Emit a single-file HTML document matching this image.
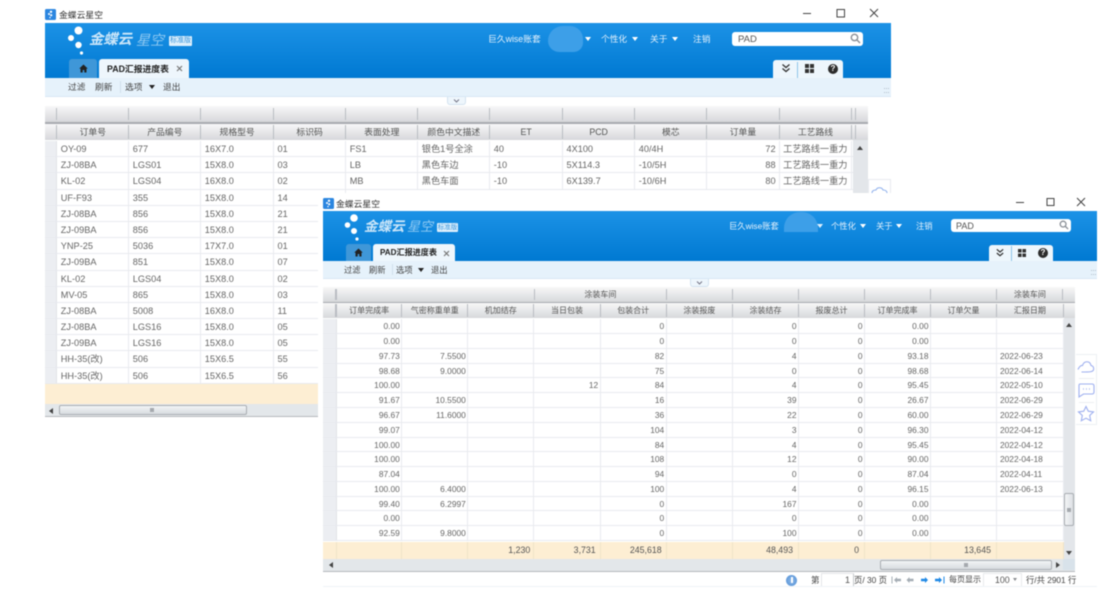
<!DOCTYPE html>
<html><head><meta charset="utf-8"><style>
html,body{margin:0;padding:0;background:#fff}
#p{position:relative;width:1111px;height:597px;overflow:hidden;background:#fff;filter:blur(.45px);font-family:"Liberation Sans","Noto Sans CJK SC",sans-serif;color:#555}
#p *{box-sizing:border-box}
.a,.t{position:absolute}
.t{white-space:nowrap;line-height:12px;height:12px}
.w{color:#e4f1fc}
.tb{color:#444}
.bl{background:linear-gradient(#1c92e6,#0079d2)}
.hd{background:linear-gradient(#f8f8f8,#d6d8db)}
.g{display:grid}
.g i{font-style:normal;display:block;overflow:hidden;white-space:nowrap;border-right:1px solid #e9ebf0;padding:0 3px;text-align:right}
.g i.l{text-align:left}
.g i:first-child{background:#eceef2;border-right:1px solid #e1e3e8}
#r1 .g{grid-template-columns:12.3px 72px 72px 72.7px 72.3px 72px 72px 72.7px 72.3px 72px 72.4px 72.6px;height:16.2px;line-height:16px;font-size:9.2px;border-bottom:1px solid #e8eaef;color:#666}
#r1 .g i{padding:0 3px 0 3.5px}
#r2 .g{grid-template-columns:14px 65.3px 66px 66px 66.4px 66px 66.3px 66px 66px 66px 66px 66.7px;height:14.79px;line-height:15.6px;font-size:8.4px;border-bottom:1px solid #e8eaef;color:#666}
#r2 .g i{padding-right:1.5px}
.hg i{background:none!important;border-right:1px solid #b9bcc2!important;text-align:center!important;color:#555;padding:0!important}
.f{font-size:8.8px;color:#555}
.f i{background:none!important;border-right:1px solid #f0e3c8!important}
</style></head><body><div id="p">

<!-- WINDOW 1 -->
<svg class="a" style="left:45px;top:9px" width="11" height="11" viewBox="0 0 11 11"><rect width="11" height="11" rx="1.5" fill="#2b86e0"/><circle cx="6" cy="2.8" r="1.2" fill="#fff"/><circle cx="4" cy="5" r="1" fill="#fff"/><circle cx="6.2" cy="6.2" r="1.1" fill="#fff"/><circle cx="5" cy="8.6" r=".7" fill="#fff"/></svg>
<span class="t" style="left:59px;top:9px;font-size:8.8px;color:#333">金蝶云星空</span>
<svg class="a" style="left:800px;top:6px" width="82" height="14" viewBox="0 0 82 14" fill="none" stroke="#444" stroke-width="1"><path d="M3 7.5h8M37 3.5h7.500v7.500H37zM70 3l8 8M78 3l-8 8"/></svg>

<div class="a bl" style="left:45px;top:23px;width:846px;height:55px"></div>
<svg class="a" style="left:66px;top:25px" width="24" height="32" viewBox="0 0 24 32" fill="#fff"><circle cx="12.5" cy="5.500" r="4"/><circle cx="5" cy="13" r="3"/><circle cx="12.5" cy="20" r="3.200"/><circle cx="15.500" cy="28" r="1.600"/></svg>
<span class="t" style="left:89px;top:33px;font-size:14.300px;line-height:15px;height:15px;color:#dff0fc;font-style:italic;font-weight:bold;opacity:.9">金蝶云</span>
<span class="t" style="left:136px;top:33px;font-size:14px;line-height:15px;height:15px;color:#8fc9f2;font-style:italic">星空</span>
<div class="a" style="left:169px;top:36px;width:23px;height:10px;background:#dff0fc;border-radius:1px;color:#3b97dd;font-size:7px;line-height:10px;text-align:center;white-space:nowrap">标准版</div>

<div class="a" style="left:69px;top:59px;width:28px;height:19px;background:#3f97d8;border-radius:3px 3px 0 0"></div>
<svg class="a" style="left:79px;top:64px" width="9" height="9" viewBox="0 0 9 9" fill="#222"><path d="M4.5 .5L.2 4.600h1.300V8.500h2.200V6h1.600v2.500h2.200V4.600h1.300z"/></svg>
<div class="a" style="left:98.5px;top:59px;width:90px;height:19px;background:#eef6fc;border-radius:3px 3px 0 0"></div>
<span class="t" style="left:107px;top:63px;font-size:8.800px;font-weight:bold;color:#222">PAD汇报进度表</span>
<svg class="a" style="left:176px;top:65px" width="7" height="7" viewBox="0 0 7 7" stroke="#777" stroke-width="1.200"><path d="M1 1l5 5M6 1L1 6"/></svg>

<span class="t w" style="left:488px;top:33px;font-size:8.800px">巨久wise账套</span>
<div class="a" style="left:548px;top:26px;width:35px;height:26px;background:#3d9fe8;border-radius:16px 14px 10px 12px"></div>
<span class="a" style="left:585px;top:37px;border:3px solid transparent;border-top:4px solid #fff"></span>
<span class="t w" style="left:601px;top:33px;font-size:8.700px">个性化</span>
<span class="a" style="left:632px;top:37px;border:3px solid transparent;border-top:4px solid #fff"></span>
<span class="t w" style="left:650px;top:33px;font-size:8.700px">关于</span>
<span class="a" style="left:672px;top:37px;border:3px solid transparent;border-top:4px solid #fff"></span>
<span class="t w" style="left:693px;top:33px;font-size:8.700px">注销</span>
<div class="a" style="left:732px;top:32px;width:131px;height:14px;background:#fff;border-radius:3px"></div>
<span class="t" style="left:738px;top:34px;font-size:9.500px;color:#555">PAD</span>
<svg class="a" style="left:850px;top:33px" width="11" height="11" viewBox="0 0 11 11" fill="none" stroke="#8a8f96" stroke-width="1.400"><circle cx="4.500" cy="4.500" r="3.200"/><path d="M7 7l3 3"/></svg>

<div class="a" style="left:773px;top:60px;width:70px;height:18px;background:#eef6fc;border-radius:3px 3px 0 0"></div>
<div class="a" style="left:797px;top:62px;width:1px;height:16px;background:#8ec4ea"></div>
<svg class="a" style="left:781px;top:63px" width="10" height="11" viewBox="0 0 10 11" fill="none" stroke="#333" stroke-width="1.300"><path d="M1.500 1.500L5 4.500l3.500-3M1.500 5.500L5 8.500l3.500-3"/></svg>
<svg class="a" style="left:805px;top:64px" width="9" height="9" viewBox="0 0 9 9" fill="#333"><path d="M0 0h4v4H0zM5 0h4v4H5zM0 5h4v4H0zM5 5h4v4H5z"/></svg>
<div class="a" style="left:828px;top:64px;width:10px;height:10px;border-radius:50%;background:#2c2c2c;color:#fff;font-size:8px;line-height:10px;text-align:center;font-weight:bold">?</div>

<div class="a" style="left:45px;top:78px;width:846px;height:19px;background:#e6f2fb;border-bottom:1px solid #d8e8f5"></div>
<span class="t tb" style="left:68px;top:81px;font-size:8.700px">过滤</span>
<span class="t tb" style="left:95px;top:81px;font-size:8.700px">刷新</span>
<div class="a" style="left:120px;top:81px;width:1px;height:12px;background:#d0dfeb"></div>
<span class="t tb" style="left:125px;top:81px;font-size:8.700px">选项</span>
<span class="a" style="left:149px;top:85px;border:3px solid transparent;border-top:4px solid #222"></span>
<span class="t tb" style="left:163px;top:81px;font-size:8.700px">退出</span>
<div class="a" style="left:884px;top:88px;width:5px;height:5px;border-top:1px dotted #b5c0cc;border-bottom:1px dotted #b5c0cc"></div>
<div class="a" style="left:447px;top:97px;width:19px;height:8px;background:#eef6fc;border:1px solid #d3e2ef;border-top:0;border-radius:0 0 3px 3px"></div>
<svg class="a" style="left:453px;top:99px" width="7" height="4" viewBox="0 0 7 4" fill="none" stroke="#778" stroke-width="1"><path d="M1 .500l2.500 2.500L6 .500"/></svg>

<div class="a hd" style="left:45px;top:106px;width:823px;height:16px"></div>
<div class="a" style="left:45px;top:122px;width:823px;height:1.500px;background:#a8abb0"></div>
<div class="a hd" style="left:45px;top:124px;width:823px;height:16px"></div>
<div class="a g hg" style="left:45px;top:108px;width:808px;height:12px;grid-template-columns:12.300px 72px 72px 72.700px 72.300px 72px 72px 72.700px 72.300px 72px 72.400px 72.600px"><i></i><i></i><i></i><i></i><i></i><i></i><i></i><i></i><i></i><i></i><i></i><i></i></div>
<div class="a g hg" style="left:45px;top:125px;width:808px;height:14px;line-height:14px;font-size:8.800px;grid-template-columns:12.300px 72px 72px 72.700px 72.300px 72px 72px 72.700px 72.300px 72px 72.400px 72.600px"><i></i><i>订单号</i><i>产品编号</i><i>规格型号</i><i>标识码</i><i>表面处理</i><i>颜色中文描述</i><i>ET</i><i>PCD</i><i>模芯</i><i>订单量</i><i>工艺路线</i></div>
<div class="a" style="left:855px;top:108px;width:1px;height:12px;background:#b9bcc2"></div>
<div class="a" style="left:855px;top:125px;width:1px;height:14px;background:#b9bcc2"></div>

<div id="r1" class="a" style="left:45px;top:141px;width:808px">
<div class="g"><i></i><i class="l">OY-09</i><i class="l">677</i><i class="l">16X7.0</i><i class="l">01</i><i class="l">FS1</i><i class="l">银色1号全涂</i><i class="l">40</i><i class="l">4X100</i><i class="l">40/4H</i><i>72</i><i class="l">工艺路线一重力</i></div>
<div class="g"><i></i><i class="l">ZJ-08BA</i><i class="l">LGS01</i><i class="l">15X8.0</i><i class="l">03</i><i class="l">LB</i><i class="l">黑色车边</i><i class="l">-10</i><i class="l">5X114.3</i><i class="l">-10/5H</i><i>88</i><i class="l">工艺路线一重力</i></div>
<div class="g"><i></i><i class="l">KL-02</i><i class="l">LGS04</i><i class="l">16X8.0</i><i class="l">02</i><i class="l">MB</i><i class="l">黑色车面</i><i class="l">-10</i><i class="l">6X139.7</i><i class="l">-10/6H</i><i>80</i><i class="l">工艺路线一重力</i></div>
<div class="g"><i></i><i class="l">UF-F93</i><i class="l">355</i><i class="l">15X8.0</i><i class="l">14</i></div>
<div class="g"><i></i><i class="l">ZJ-08BA</i><i class="l">856</i><i class="l">15X8.0</i><i class="l">21</i></div>
<div class="g"><i></i><i class="l">ZJ-09BA</i><i class="l">856</i><i class="l">15X8.0</i><i class="l">21</i></div>
<div class="g"><i></i><i class="l">YNP-25</i><i class="l">5036</i><i class="l">17X7.0</i><i class="l">01</i></div>
<div class="g"><i></i><i class="l">ZJ-09BA</i><i class="l">851</i><i class="l">15X8.0</i><i class="l">07</i></div>
<div class="g"><i></i><i class="l">KL-02</i><i class="l">LGS04</i><i class="l">15X8.0</i><i class="l">02</i></div>
<div class="g"><i></i><i class="l">MV-05</i><i class="l">865</i><i class="l">15X8.0</i><i class="l">03</i></div>
<div class="g"><i></i><i class="l">ZJ-08BA</i><i class="l">5008</i><i class="l">16X8.0</i><i class="l">11</i></div>
<div class="g"><i></i><i class="l">ZJ-08BA</i><i class="l">LGS16</i><i class="l">15X8.0</i><i class="l">05</i></div>
<div class="g"><i></i><i class="l">ZJ-09BA</i><i class="l">LGS16</i><i class="l">15X8.0</i><i class="l">05</i></div>
<div class="g"><i></i><i class="l">HH-35(改)</i><i class="l">506</i><i class="l">15X6.5</i><i class="l">55</i></div>
<div class="g"><i></i><i class="l">HH-35(改)</i><i class="l">506</i><i class="l">15X6.5</i><i class="l">56</i></div>
</div>
<div class="a" style="left:853px;top:140px;width:15px;height:60px;background:#e3e6ea"></div>
<span class="a" style="left:857px;top:143px;border:3px solid transparent;border-bottom:4px solid #444"></span>
<div class="a" style="left:45px;top:384px;width:280px;height:20px;background:#fdeed3"></div>
<div class="a" style="left:45px;top:404px;width:280px;height:13px;background:#e3e7ea;border-bottom:1px solid #b5b8bc"></div>
<span class="a" style="left:49px;top:408px;border:3px solid transparent;border-right:4px solid #444;border-left:0"></span>
<div class="a" style="left:59px;top:405px;width:188px;height:10px;background:linear-gradient(#f2f4f6,#d8dce0);border:1px solid #a9adb2;border-radius:2px"></div>
<div class="a" style="left:150px;top:408px;width:4px;height:4px;background:#a5a9ae"></div>
<div class="a" style="left:868px;top:179px;width:23px;height:20px;background:#fff;border:1px solid #e8ebef"></div>
<svg class="a" style="left:871px;top:186px" width="17" height="8" viewBox="0 0 17 8" fill="none" stroke="#8fb0ec" stroke-width="1.100"><path d="M1 7c0-3 3-3 4-3 1-3 6-3 7 0 2 0 4 1 4 3"/></svg>

<!-- WINDOW 2 -->
<div class="a" style="left:318px;top:193px;width:793px;height:404px;background:#fff"></div>
<svg class="a" style="left:323px;top:198px" width="11" height="11" viewBox="0 0 11 11"><rect width="11" height="11" rx="1.500" fill="#2b86e0"/><circle cx="6" cy="2.800" r="1.200" fill="#fff"/><circle cx="4" cy="5" r="1" fill="#fff"/><circle cx="6.200" cy="6.200" r="1.100" fill="#fff"/><circle cx="5" cy="8.600" r=".700" fill="#fff"/></svg>
<span class="t" style="left:336px;top:198px;font-size:8.800px;color:#333">金蝶云星空</span>
<svg class="a" style="left:1013px;top:195px" width="76" height="14" viewBox="0 0 76 14" fill="none" stroke="#444" stroke-width="1"><path d="M3 7.500h8M34 3.500h7v7h-7zM64 3l8 8M72 3l-8 8"/></svg>

<div class="a bl" style="left:323px;top:211px;width:774px;height:50px"></div>
<svg class="a" style="left:343px;top:213px" width="22" height="30" viewBox="0 0 22 30" fill="#fff"><circle cx="11" cy="5" r="3.800"/><circle cx="4.500" cy="12" r="2.800"/><circle cx="11" cy="18" r="3"/><circle cx="14" cy="26" r="1.600"/></svg>
<span class="t" style="left:364px;top:220px;font-size:13.500px;line-height:14px;height:14px;color:#dff0fc;font-weight:bold;font-style:italic;opacity:.9">金蝶云</span>
<span class="t" style="left:407px;top:220px;font-size:13px;line-height:14px;height:14px;color:#8fc9f2;font-style:italic">星空</span>
<div class="a" style="left:437px;top:223px;width:21px;height:9px;background:#dff0fc;border-radius:1px;color:#3b97dd;font-size:6.500px;line-height:9px;text-align:center;white-space:nowrap">标准版</div>

<div class="a" style="left:346px;top:244px;width:25px;height:17px;background:#3f97d8;border-radius:3px 3px 0 0"></div>
<svg class="a" style="left:354px;top:248px" width="9" height="9" viewBox="0 0 9 9" fill="#222"><path d="M4.500 .500L.200 4.600h1.300V8.500h2.200V6h1.600v2.500h2.200V4.600h1.300z"/></svg>
<div class="a" style="left:372.500px;top:244px;width:82px;height:17px;background:#eef6fc;border-radius:3px 3px 0 0"></div>
<span class="t" style="left:380px;top:247px;font-size:8.100px;font-weight:bold;color:#222">PAD汇报进度表</span>
<svg class="a" style="left:443px;top:250px" width="7" height="7" viewBox="0 0 7 7" stroke="#777" stroke-width="1.200"><path d="M1 1l5 5M6 1L1 6"/></svg>

<span class="t w" style="left:729px;top:220px;font-size:8.300px">巨久wise账套</span>
<div class="a" style="left:784px;top:212px;width:34px;height:20px;background:#3d9fe8;border-radius:16px 16px 0 0"></div>
<span class="a" style="left:817px;top:224px;border:3px solid transparent;border-top:4px solid #dff0fc"></span>
<span class="t w" style="left:831px;top:220px;font-size:8.300px">个性化</span>
<span class="a" style="left:860px;top:224px;border:3px solid transparent;border-top:4px solid #fff"></span>
<span class="t w" style="left:876px;top:220px;font-size:8.300px">关于</span>
<span class="a" style="left:896px;top:224px;border:3px solid transparent;border-top:4px solid #fff"></span>
<span class="t w" style="left:916px;top:220px;font-size:8.300px">注销</span>
<div class="a" style="left:951px;top:219px;width:120px;height:13px;background:#fff;border-radius:3px"></div>
<span class="t" style="left:956px;top:220px;font-size:9px;color:#555">PAD</span>
<svg class="a" style="left:1059px;top:220px" width="10" height="10" viewBox="0 0 11 11" fill="none" stroke="#8a8f96" stroke-width="1.400"><circle cx="4.500" cy="4.500" r="3.200"/><path d="M7 7l3 3"/></svg>

<div class="a" style="left:989px;top:245px;width:64px;height:16px;background:#eef6fc;border-radius:3px 3px 0 0"></div>
<div class="a" style="left:1011px;top:246px;width:1px;height:15px;background:#8ec4ea"></div>
<svg class="a" style="left:995px;top:248px" width="10" height="10" viewBox="0 0 10 11" fill="none" stroke="#333" stroke-width="1.300"><path d="M1.500 1.500L5 4.500l3.500-3M1.500 5.500L5 8.500l3.500-3"/></svg>
<svg class="a" style="left:1018px;top:249px" width="8" height="8" viewBox="0 0 9 9" fill="#333"><path d="M0 0h4v4H0zM5 0h4v4H5zM0 5h4v4H0zM5 5h4v4H5z"/></svg>
<div class="a" style="left:1038px;top:248px;width:10px;height:10px;border-radius:50%;background:#2c2c2c;color:#fff;font-size:8px;line-height:10px;text-align:center;font-weight:bold">?</div>

<div class="a" style="left:323px;top:261px;width:774px;height:18px;background:#e6f2fb;border-bottom:1px solid #d8e8f5"></div>
<span class="t tb" style="left:344px;top:264px;font-size:8.300px">过滤</span>
<span class="t tb" style="left:369px;top:264px;font-size:8.300px">刷新</span>
<div class="a" style="left:392px;top:264px;width:1px;height:11px;background:#d0dfeb"></div>
<span class="t tb" style="left:396px;top:264px;font-size:8.300px">选项</span>
<span class="a" style="left:418px;top:268px;border:3px solid transparent;border-top:4px solid #222"></span>
<span class="t tb" style="left:431px;top:264px;font-size:8.300px">退出</span>
<div class="a" style="left:1091px;top:270px;width:5px;height:5px;border-top:1px dotted #b5c0cc;border-bottom:1px dotted #b5c0cc"></div>
<div class="a" style="left:690px;top:279px;width:19px;height:8px;background:#eef6fc;border:1px solid #d3e2ef;border-top:0;border-radius:0 0 3px 3px"></div>
<svg class="a" style="left:696px;top:281px" width="7" height="4" viewBox="0 0 7 4" fill="none" stroke="#778" stroke-width="1"><path d="M1 .500l2.500 2.500L6 .500"/></svg>

<div class="a hd" style="left:323px;top:287px;width:752px;height:14.500px"></div>
<div class="a" style="left:323px;top:301.500px;width:752px;height:1.500px;background:#a8abb0"></div>
<div class="a hd" style="left:323px;top:303px;width:752px;height:15px"></div>
<div class="a g hg" style="left:323px;top:289px;width:741px;height:11px;line-height:11px;font-size:8px;grid-template-columns:14px 197.700px 132.400px 66px 66.300px 66px 66px 66px 66px 66.700px"><i></i><i></i><i>涂装车间</i><i></i><i></i><i></i><i></i><i></i><i>涂装车间</i></div>
<div class="a g hg" style="left:323px;top:304px;width:741px;height:13px;line-height:13px;font-size:8px;grid-template-columns:14px 65.300px 66px 66px 66.400px 66px 66.300px 66px 66px 66px 66px 66.700px"><i></i><i>订单完成率</i><i>气密称重单重</i><i>机加结存</i><i>当日包装</i><i>包装合计</i><i>涂装报废</i><i>涂装结存</i><i>报废总计</i><i>订单完成率</i><i>订单欠量</i><i>汇报日期</i></div>
<div class="a" style="left:335px;top:289px;width:1px;height:11px;background:#b9bcc2"></div>
<div class="a" style="left:335px;top:304px;width:1px;height:13px;background:#b9bcc2"></div>

<div id="r2" class="a" style="left:323px;top:319.300px;width:741px">
<div class="g"><i></i><i>0.00</i><i></i><i></i><i></i><i>0</i><i></i><i>0</i><i>0</i><i>0.00</i><i></i><i></i></div>
<div class="g"><i></i><i>0.00</i><i></i><i></i><i></i><i>0</i><i></i><i>0</i><i>0</i><i>0.00</i><i></i><i></i></div>
<div class="g"><i></i><i>97.73</i><i>7.5500</i><i></i><i></i><i>82</i><i></i><i>4</i><i>0</i><i>93.18</i><i></i><i class="l">2022-06-23</i></div>
<div class="g"><i></i><i>98.68</i><i>9.0000</i><i></i><i></i><i>75</i><i></i><i>0</i><i>0</i><i>98.68</i><i></i><i class="l">2022-06-14</i></div>
<div class="g"><i></i><i>100.00</i><i></i><i></i><i>12</i><i>84</i><i></i><i>4</i><i>0</i><i>95.45</i><i></i><i class="l">2022-05-10</i></div>
<div class="g"><i></i><i>91.67</i><i>10.5500</i><i></i><i></i><i>16</i><i></i><i>39</i><i>0</i><i>26.67</i><i></i><i class="l">2022-06-29</i></div>
<div class="g"><i></i><i>96.67</i><i>11.6000</i><i></i><i></i><i>36</i><i></i><i>22</i><i>0</i><i>60.00</i><i></i><i class="l">2022-06-29</i></div>
<div class="g"><i></i><i>99.07</i><i></i><i></i><i></i><i>104</i><i></i><i>3</i><i>0</i><i>96.30</i><i></i><i class="l">2022-04-12</i></div>
<div class="g"><i></i><i>100.00</i><i></i><i></i><i></i><i>84</i><i></i><i>4</i><i>0</i><i>95.45</i><i></i><i class="l">2022-04-12</i></div>
<div class="g"><i></i><i>100.00</i><i></i><i></i><i></i><i>108</i><i></i><i>12</i><i>0</i><i>90.00</i><i></i><i class="l">2022-04-18</i></div>
<div class="g"><i></i><i>87.04</i><i></i><i></i><i></i><i>94</i><i></i><i>0</i><i>0</i><i>87.04</i><i></i><i class="l">2022-04-11</i></div>
<div class="g"><i></i><i>100.00</i><i>6.4000</i><i></i><i></i><i>100</i><i></i><i>4</i><i>0</i><i>96.15</i><i></i><i class="l">2022-06-13</i></div>
<div class="g"><i></i><i>99.40</i><i>6.2997</i><i></i><i></i><i>0</i><i></i><i>167</i><i>0</i><i>0.00</i><i></i><i></i></div>
<div class="g"><i></i><i>0.00</i><i></i><i></i><i></i><i>0</i><i></i><i>0</i><i>0</i><i>0.00</i><i></i><i></i></div>
<div class="g"><i></i><i>92.59</i><i>9.8000</i><i></i><i></i><i>0</i><i></i><i>100</i><i>0</i><i>0.00</i><i></i><i></i></div>
</div>

<div class="a" style="left:1064px;top:318px;width:11px;height:241px;background:#e3e6ea"></div>
<span class="a" style="left:1066px;top:320px;border:3px solid transparent;border-bottom:4px solid #444"></span>
<div class="a" style="left:1064px;top:493px;width:9.500px;height:33px;background:linear-gradient(90deg,#f2f4f6,#dde0e4);border:1px solid #a9adb2;border-radius:2px"></div>
<div class="a" style="left:1067px;top:508px;width:4px;height:4px;background:#a5a9ae"></div>

<div class="a g f" style="left:323px;top:541.700px;width:741px;height:17.600px;line-height:17px;background:#fdeed3;grid-template-columns:14px 65.300px 66px 66px 66.400px 66px 66.300px 66px 66px 66px 66px 66.700px"><i></i><i></i><i></i><i style="padding-right:3px">1,230</i><i style="padding-right:4px">3,731</i><i style="padding-right:4px">245,618</i><i></i><i style="padding-right:5px">48,493</i><i style="padding-right:5px">0</i><i></i><i style="padding-right:5px">13,645</i><i></i></div>
<div class="a" style="left:1064px;top:541.700px;width:11px;height:17.600px;background:#e3e6ea"></div>
<span class="a" style="left:1066px;top:551px;border:3px solid transparent;border-top:4px solid #444"></span>
<div class="a" style="left:323px;top:559.300px;width:752px;height:12.500px;background:#e3e7ea;border-bottom:1px solid #b5b8bc"></div>
<span class="a" style="left:329px;top:562px;border:3px solid transparent;border-right:4px solid #444;border-left:0"></span>
<div class="a" style="left:880px;top:560px;width:172px;height:10px;background:linear-gradient(#f2f4f6,#d8dce0);border:1px solid #a9adb2;border-radius:2px"></div>
<div class="a" style="left:964px;top:563px;width:4px;height:4px;background:#a5a9ae"></div>
<span class="a" style="left:1056px;top:562px;border:3px solid transparent;border-left:4px solid #444;border-right:0"></span>
<div class="a" style="left:1063px;top:559.300px;width:12px;height:11px;background:#d8e2ea"></div>

<!-- side panel -->
<div class="a" style="left:1076px;top:354px;width:21px;height:71px;background:#fff;border:1px solid #edf0f3;border-left:0"></div>
<svg class="a" style="left:1077px;top:358px" width="18" height="66" viewBox="0 0 18 66" fill="none" stroke="#9fb0ef" stroke-width="1.100"><path d="M1 11.500C2 9 4 7 5.500 7.500 7 2.500 13 2.500 14 7.500 16.500 8 17 10 16.500 12 15.500 14 13 14 4.500 14"/><path d="M3 26h12q2 0 2 2v6q0 2-2 2H6.500L2 39V27.500q0-1.500 1-1.500z"/><path d="M6 31h.800M9 31h.800M12 31h.800" stroke-width="1.600"/><path d="M9 48.500l2.300 4.700 5.200.700-3.800 3.600 1 5.200L9 60.200l-4.700 2.500 1-5.200-3.800-3.600 5.200-.700z"/></svg>
<div class="a" style="left:1079px;top:377.500px;width:15px;height:1px;background:#eceef1"></div>
<div class="a" style="left:1079px;top:401.500px;width:15px;height:1px;background:#eceef1"></div>

<!-- pager -->
<div class="a" style="left:786px;top:574.500px;width:11px;height:11px;border-radius:50%;background:radial-gradient(#8db8e8,#4f8ed4)"></div>
<div class="a" style="left:791px;top:577px;width:1.500px;height:6px;background:#fff"></div>
<span class="t" style="left:811px;top:574px;font-size:8.500px;color:#444">第</span>
<div class="a" style="left:821px;top:573px;width:33px;height:13.500px;background:#fff;border:1px solid #e3e5e8;border-right:1px solid #c5c8cc;border-radius:1px;font-size:9px;line-height:12px;text-align:right;padding-right:3px;color:#555">1</div>
<span class="t" style="left:854px;top:574px;font-size:8.400px;color:#444">页/ 30 页</span>
<svg class="a" style="left:891px;top:576px" width="54" height="8" viewBox="0 0 54 8"><path d="M1 .500v7" stroke="#a5adb5"/><path d="M3 4l3-3v1.800h4v2.400H6V7z" fill="#a5adb5"/><path d="M15.500 4l3-3v1.800h4v2.400h-4V7z" fill="#a5adb5"/><path d="M37 4l-3-3v1.800h-4v2.400h4V7z" fill="#1e88e5"/><path d="M51 4l-3-3v1.800h-4v2.400h4V7z" fill="#1e88e5"/><path d="M53 .500v7" stroke="#1e88e5"/></svg>
<span class="t" style="left:949px;top:574px;font-size:8px;color:#444">每页显示</span>
<div class="a" style="left:983px;top:573px;width:39px;height:13.500px;background:#fff;border:1px solid #e8eaec;font-size:8.800px;line-height:12px;padding-left:11px;color:#555">100</div>
<span class="a" style="left:1013px;top:578px;border:2.500px solid transparent;border-top:3px solid #8a8d91"></span>
<span class="t" style="left:1026px;top:574px;font-size:8.300px;color:#444">行/共 2901 行</span>
<div class="a" style="left:323px;top:586px;width:774px;height:1px;background:#eef3f7"></div>
</div></body></html>
